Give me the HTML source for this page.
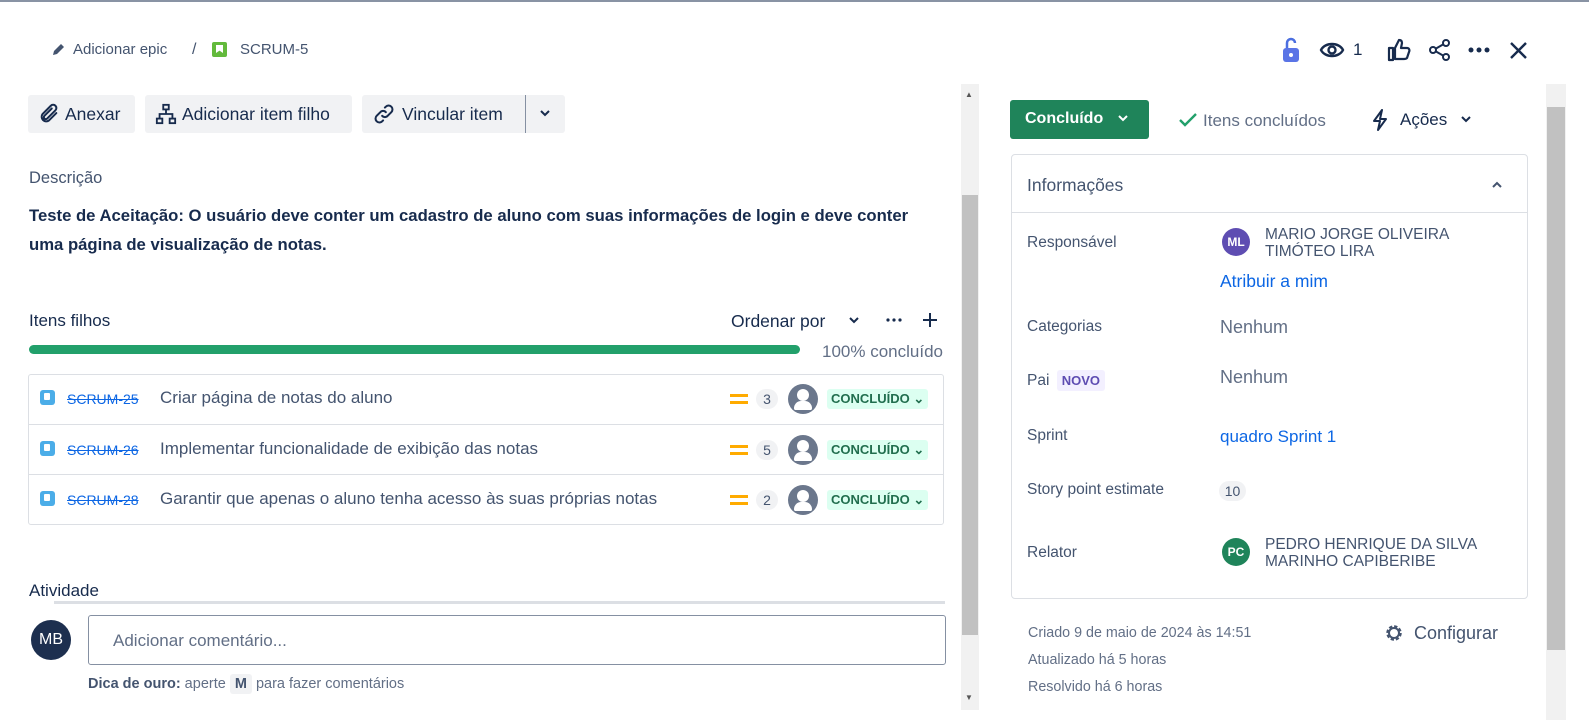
<!DOCTYPE html>
<html><head><meta charset="utf-8"><style>
*{margin:0;padding:0;box-sizing:border-box}
body{width:1589px;height:720px;overflow:hidden;background:#fff;font-family:"Liberation Sans",sans-serif;color:#172b4d;position:relative}
.a{position:absolute;white-space:nowrap}
.btn{position:absolute;background:#f1f2f4;border-radius:3px;height:38px;top:95px;font-size:17.5px;display:flex;align-items:center;padding-left:10px;color:#172b4d}
.row{position:absolute;left:29px;width:914px;height:50px;border-top:1px solid #dcdfe4}
.key{position:absolute;left:38px;top:17px;font-size:14px;color:#0c66e4;text-decoration:line-through}
.ttl{position:absolute;left:131px;top:14px;font-size:17px;color:#44546f}
.ic{position:absolute;left:11px;top:16px;width:15px;height:15px;background:#4bade8;border-radius:3px}
.ic:after{content:"";position:absolute;left:4px;top:3px;width:6px;height:7px;background:#fff;border-radius:1px}
.pr{position:absolute;left:701px;width:18px;height:3px;background:#ffab00}
.num{position:absolute;left:727px;top:15px;width:22px;height:20px;border-radius:10px;background:#f1f2f4;font-size:14px;color:#44546f;text-align:center;line-height:20px}
.av{position:absolute;left:759px;top:10px;width:30px;height:30px;border-radius:50%;background:#6b778c}
.av:before{content:"";position:absolute;left:9px;top:5px;width:12px;height:12px;border-radius:50%;background:#fff}
.av:after{content:"";position:absolute;left:6px;top:17px;width:18px;height:9px;border-radius:8px 8px 2px 2px;background:#fff}
.st{position:absolute;left:798px;top:15px;height:20px;background:#dcfff1;color:#216e4e;font-size:13px;font-weight:bold;padding:2px 4px;border-radius:3px}
.fl{position:absolute;left:1027px;font-size:15.5px;color:#44546f}
.fv{position:absolute;left:1220px;font-size:18px;color:#626f86}
</style></head><body>
<div class="a" style="left:0;top:0;width:1589px;height:2px;background:#8993a4"></div>

<svg class="a" style="left:52px;top:43px" width="12" height="13" viewBox="0 0 12 13"><path d="M1 12l1-4 7-7 3 3-7 7z" fill="#44546f"/></svg>
<div class="a" style="left:73px;top:41px;font-size:15px;color:#44546f">Adicionar epic</div>
<div class="a" style="left:192px;top:41px;font-size:16px;color:#44546f">/</div>
<div class="a" style="left:212px;top:42px;width:15px;height:15px;background:#63ba3c;border-radius:2px"><div style="position:absolute;left:4px;top:3px;width:7px;height:8px;background:#fff;clip-path:polygon(0 0,100% 0,100% 100%,50% 70%,0 100%)"></div></div>
<div class="a" style="left:240px;top:41px;font-size:15px;color:#44546f">SCRUM-5</div>

<svg class="a" style="left:1282px;top:37px" width="18" height="26" viewBox="0 0 18 26"><path d="M5 11V6a4 4 0 0 1 8 0" stroke="#4c6fe0" stroke-width="2.5" fill="none"/><rect x="1" y="11" width="16" height="14" rx="3" fill="#5a74e6"/><circle cx="9" cy="18" r="2" fill="#fff"/></svg>
<svg class="a" style="left:1319px;top:39px" width="26" height="22" viewBox="0 0 26 22"><path d="M2 11C6 3 20 3 24 11C20 19 6 19 2 11z" stroke="#172b4d" stroke-width="2.4" fill="none"/><circle cx="13" cy="11" r="3.5" stroke="#172b4d" stroke-width="2.4" fill="none"/></svg>
<div class="a" style="left:1353px;top:40px;font-size:17px">1</div>
<svg class="a" style="left:1387px;top:38px" width="24" height="24" viewBox="0 0 24 24"><path d="M2 10h4v12H2zM8 21V10l4-8c2 0 3 1 3 3l-1 5h6c2 0 3 2 2 4l-2 6c-1 1-2 1-3 1z" stroke="#172b4d" stroke-width="2.2" fill="none" stroke-linejoin="round"/></svg>
<svg class="a" style="left:1428px;top:38px" width="24" height="24" viewBox="0 0 24 24"><circle cx="18" cy="5" r="3" stroke="#172b4d" stroke-width="2" fill="none"/><circle cx="5" cy="12" r="3" stroke="#172b4d" stroke-width="2" fill="none"/><circle cx="18" cy="19" r="3" stroke="#172b4d" stroke-width="2" fill="none"/><path d="M8 10.5l7-4M8 13.5l7 4" stroke="#172b4d" stroke-width="2"/></svg>
<svg class="a" style="left:1467px;top:46px" width="24" height="8"><circle cx="4" cy="4" r="2.5" fill="#172b4d"/><circle cx="12" cy="4" r="2.5" fill="#172b4d"/><circle cx="20" cy="4" r="2.5" fill="#172b4d"/></svg>
<svg class="a" style="left:1509px;top:41px" width="19" height="19"><path d="M2 2l15 15M17 2L2 17" stroke="#172b4d" stroke-width="2.4"/></svg>

<div class="btn" style="left:28px;width:107px"><svg width="22" height="22" viewBox="0 0 24 24"><path d="M20 11l-8 8a5 5 0 0 1-7-7l9-9a3.5 3.5 0 0 1 5 5l-9 9a2 2 0 0 1-3-3l8-8" stroke="#172b4d" stroke-width="2.2" fill="none" stroke-linecap="round"/></svg><span style="margin-left:5px">Anexar</span></div>
<div class="btn" style="left:145px;width:207px"><svg width="22" height="22" viewBox="0 0 24 24"><rect x="9" y="2" width="6" height="5" stroke="#172b4d" stroke-width="2" fill="none"/><rect x="2" y="17" width="6" height="5" stroke="#172b4d" stroke-width="2" fill="none"/><rect x="16" y="17" width="6" height="5" stroke="#172b4d" stroke-width="2" fill="none"/><path d="M12 7v5M5 17v-5h14v5" stroke="#172b4d" stroke-width="2" fill="none"/></svg><span style="margin-left:5px">Adicionar item filho</span></div>
<div class="btn" style="left:362px;width:203px"><svg width="24" height="22" viewBox="0 0 24 24"><path d="M10 14a4 4 0 0 0 6 0l4-4a4 4 0 0 0-6-6l-1 1M14 10a4 4 0 0 0-6 0l-4 4a4 4 0 0 0 6 6l1-1" stroke="#172b4d" stroke-width="2.2" fill="none" stroke-linecap="round"/></svg><span style="margin-left:6px">Vincular item</span>
<div style="position:absolute;left:163px;top:0;width:1px;height:38px;background:#8590a2"></div>
<svg style="position:absolute;left:178px;top:15px" width="10" height="8"><path d="M1 1l4 4 4-4" stroke="#172b4d" stroke-width="2" fill="none"/></svg></div>

<div class="a" style="left:29px;top:169px;font-size:16.5px;color:#44546f">Descrição</div>
<div class="a" style="left:29px;top:201px;font-size:16.7px;font-weight:bold;line-height:29px;color:#172b4d">Teste de Aceitação: O usuário deve conter um cadastro de aluno com suas informações de login e deve conter<br>uma página de visualização de notas.</div>

<div class="a" style="left:29px;top:311px;font-size:17px">Itens filhos</div>
<div class="a" style="left:731px;top:311px;font-size:17.5px">Ordenar por</div>
<svg class="a" style="left:849px;top:317px" width="10" height="8"><path d="M1 1l4 4 4-4" stroke="#172b4d" stroke-width="2" fill="none"/></svg>
<svg class="a" style="left:886px;top:318px" width="16" height="4"><circle cx="2" cy="2" r="1.6" fill="#172b4d"/><circle cx="8" cy="2" r="1.6" fill="#172b4d"/><circle cx="14" cy="2" r="1.6" fill="#172b4d"/></svg>
<svg class="a" style="left:922px;top:312px" width="16" height="16"><path d="M8 1v14M1 8h14" stroke="#172b4d" stroke-width="2"/></svg>
<div class="a" style="left:29px;top:345px;width:771px;height:9px;border-radius:5px;background:#22a06b"></div>
<div class="a" style="left:822px;top:342px;font-size:17px;color:#626f86">100% concluído</div>

<div class="a" style="left:28px;top:374px;width:916px;height:151px;border:1px solid #dcdfe4;border-radius:3px"></div>
<div class="row" style="top:374px;border-top:none"><div class="ic"></div><div class="key">SCRUM-25</div><div class="ttl">Criar página de notas do aluno</div><div class="pr" style="top:20px"></div><div class="pr" style="top:27px"></div><div class="num">3</div><div class="av"></div><div class="st">CONCLUÍDO ⌄</div></div>
<div class="row" style="top:424px"><div class="ic"></div><div class="key">SCRUM-26</div><div class="ttl">Implementar funcionalidade de exibição das notas</div><div class="pr" style="top:20px"></div><div class="pr" style="top:27px"></div><div class="num">5</div><div class="av"></div><div class="st">CONCLUÍDO ⌄</div></div>
<div class="row" style="top:474px"><div class="ic"></div><div class="key">SCRUM-28</div><div class="ttl">Garantir que apenas o aluno tenha acesso às suas próprias notas</div><div class="pr" style="top:20px"></div><div class="pr" style="top:27px"></div><div class="num">2</div><div class="av"></div><div class="st">CONCLUÍDO ⌄</div></div>

<div class="a" style="left:29px;top:581px;font-size:17px">Atividade</div>
<div class="a" style="left:54px;top:601px;width:891px;height:3px;background:#dcdfe4"></div>
<div class="a" style="left:31px;top:620px;width:40px;height:40px;border-radius:50%;background:#1d2f4f;color:#fff;font-size:16px;text-align:center;line-height:40px">MB</div>
<div class="a" style="left:88px;top:615px;width:858px;height:50px;border:1px solid #8590a2;border-radius:3px"></div>
<div class="a" style="left:113px;top:631px;font-size:17px;color:#626f86">Adicionar comentário...</div>
<div class="a" style="left:88px;top:676px;font-size:14.5px;color:#626f86"><b style="color:#44546f">Dica de ouro:</b> aperte <span style="background:#f1f2f4;padding:2px 5px;border-radius:3px;font-weight:bold;color:#44546f">M</span> para fazer comentários</div>

<div class="a" style="left:961px;top:84px;width:18px;height:626px;background:#f1f1f1"></div>
<div class="a" style="left:962px;top:195px;width:16px;height:440px;background:#c1c1c1"></div>
<div class="a" style="left:965px;top:90px;font-size:8px;color:#555">▲</div>
<div class="a" style="left:965px;top:693px;font-size:8px;color:#555">▼</div>

<div class="a" style="left:1010px;top:100px;width:139px;height:39px;background:#1f845a;border-radius:3px;color:#fff;font-weight:bold;font-size:16px;padding:10px 0 0 15px">Concluído <svg style="margin-left:10px" width="10" height="8"><path d="M1 1l4 4 4-4" stroke="#fff" stroke-width="2" fill="none"/></svg></div>
<svg class="a" style="left:1179px;top:113px" width="18" height="14"><path d="M1 7l5 5L17 1" stroke="#22a06b" stroke-width="2.4" fill="none"/></svg>
<div class="a" style="left:1203px;top:111px;font-size:17px;color:#626f86">Itens concluídos</div>
<svg class="a" style="left:1372px;top:109px" width="16" height="22" viewBox="0 0 16 22"><path d="M10 1L2 12h6l-2 9 8-11H8z" stroke="#172b4d" stroke-width="2" fill="none" stroke-linejoin="round"/></svg>
<div class="a" style="left:1400px;top:110px;font-size:17px">Ações</div>
<svg class="a" style="left:1461px;top:116px" width="10" height="8"><path d="M1 1l4 4 4-4" stroke="#172b4d" stroke-width="2" fill="none"/></svg>

<div class="a" style="left:1011px;top:154px;width:517px;height:445px;border:1px solid #dcdfe4;border-radius:4px"></div>
<div class="a" style="left:1012px;top:212px;width:515px;height:1px;background:#dcdfe4"></div>
<div class="a" style="left:1027px;top:175px;font-size:17.5px;color:#44546f">Informações</div>
<svg class="a" style="left:1491px;top:181px" width="12" height="8"><path d="M2 6l4-4 4 4" stroke="#44546f" stroke-width="2" fill="none"/></svg>

<div class="fl" style="top:234px">Responsável</div>
<div class="a" style="left:1222px;top:228px;width:28px;height:28px;border-radius:50%;background:#5e4db2;color:#fff;font-size:12px;font-weight:bold;text-align:center;line-height:28px">ML</div>
<div class="a" style="left:1265px;top:226px;font-size:15.5px;line-height:17px;color:#44546f">MARIO JORGE OLIVEIRA<br>TIMÓTEO LIRA</div>
<div class="a" style="left:1220px;top:271px;font-size:17.5px;color:#0c66e4">Atribuir a mim</div>
<div class="fl" style="top:318px">Categorias</div>
<div class="fv" style="top:317px">Nenhum</div>
<div class="fl" style="top:372px">Pai <span style="background:#f3f0ff;color:#5e4db2;font-weight:bold;font-size:13px;padding:3px 5px;border-radius:3px;margin-left:3px">NOVO</span></div>
<div class="fv" style="top:367px">Nenhum</div>
<div class="fl" style="top:427px">Sprint</div>
<div class="a" style="left:1220px;top:427px;font-size:17px;color:#0c66e4">quadro Sprint 1</div>
<div class="fl" style="top:481px">Story point estimate</div>
<div class="a" style="left:1219px;top:481px;width:27px;height:20px;border-radius:10px;background:#f1f2f4;font-size:14px;color:#44546f;text-align:center;line-height:20px">10</div>
<div class="fl" style="top:544px">Relator</div>
<div class="a" style="left:1222px;top:538px;width:28px;height:28px;border-radius:50%;background:#1f845a;color:#fff;font-size:12px;font-weight:bold;text-align:center;line-height:28px">PC</div>
<div class="a" style="left:1265px;top:536px;font-size:15.5px;line-height:17px;color:#44546f">PEDRO HENRIQUE DA SILVA<br>MARINHO CAPIBERIBE</div>

<div class="a" style="left:1028px;top:620px;font-size:14.3px;color:#626f86;line-height:27px">Criado 9 de maio de 2024 às 14:51<br>Atualizado há 5 horas<br>Resolvido há 6 horas</div>
<svg class="a" style="left:1384px;top:623px" width="20" height="20" viewBox="0 0 20 20"><circle cx="10" cy="10" r="6" stroke="#44546f" stroke-width="3.5" fill="none" stroke-dasharray="3 1.7"/><circle cx="10" cy="10" r="5" stroke="#44546f" stroke-width="2" fill="none"/></svg>
<div class="a" style="left:1414px;top:623px;font-size:18px;color:#44546f">Configurar</div>

<div class="a" style="left:1546px;top:84px;width:20px;height:636px;background:#f1f1f1"></div>
<div class="a" style="left:1547px;top:107px;width:18px;height:543px;background:#c1c1c1"></div>
</body></html>
